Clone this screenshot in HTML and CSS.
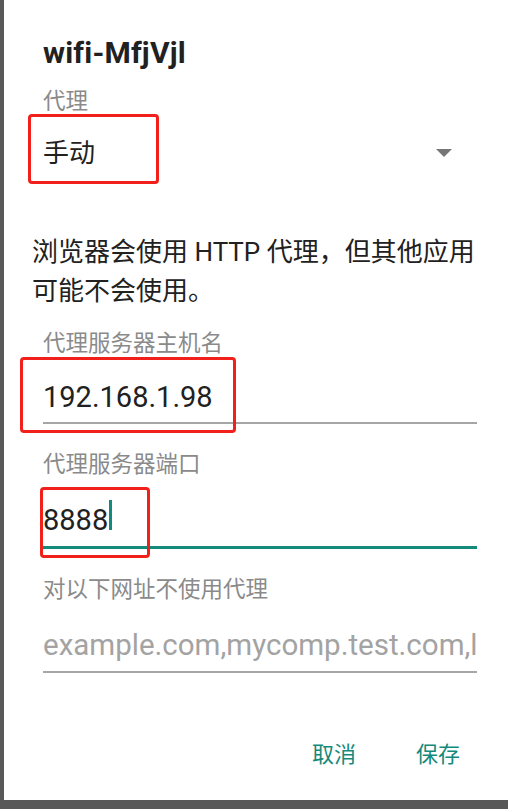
FILE: index.html
```html
<!DOCTYPE html>
<html lang="zh-CN">

<head>
    <meta charset="UTF-8">
    <meta name="viewport" content="width=device-width, initial-scale=1.0">
    <title>wifi-MfjVjl</title>
    <link rel="stylesheet" href="styles.css">
</head>

<body>
    <div class="dialog">
        <h1 class="title">wifi-MfjVjl</h1>

        <div class="label">代理</div>
        <div class="select">
            <span class="select-value">手动</span>
            <svg class="caret" width="16" height="8" viewBox="0 0 16 8">
                <path d="M0 0h16L8 8z" fill="#767676" />
            </svg>
            <span class="mark mark-select"></span>
        </div>

        <p class="note">浏览器会使用 HTTP 代理，但其他应用可能不会使用。</p>

        <div class="label">代理服务器主机名</div>
        <div class="field">
            192.168.1.98
            <span class="mark mark-host"></span>
        </div>

        <div class="label">代理服务器端口</div>
        <div class="field is-focused">
            8888<span class="cursor"></span>
            <span class="mark mark-port"></span>
        </div>

        <div class="label">对以下网址不使用代理</div>
        <div class="field is-empty">example.com,mycomp.test.com,localhost</div>

        <div class="actions">
            <button class="action">取消</button>
            <button class="action">保存</button>
        </div>
    </div>
</body>

</html>
```

FILE: styles.css
```css
body {
    margin: 0;
    background-color: #585858;
    font-family: Roboto, "Noto Sans CJK SC", sans-serif;
    color: #212121;
}

.dialog {
    box-sizing: border-box;
    width: 504px;
    height: 800px;
    margin-left: 4px;
    padding: 36px 31px 0 39px;
    background-color: #fff;
}

.title {
    margin: 0;
    font-size: 30px;
    line-height: 34px;
    font-weight: 700;
    letter-spacing: 0.2px;
}

.label {
    margin-top: 25px;
    font-size: 22.5px;
    line-height: 30px;
    color: #8a8a8a;
}

.title + .label {
    margin-top: 16px;
}

.note + .label {
    margin-top: 17px;
}

.select {
    position: relative;
    display: flex;
    align-items: center;
    justify-content: space-between;
    margin-top: 20px;
    padding-right: 25px;
    font-size: 26px;
    line-height: 34px;
}

.caret {
    display: block;
}

.note {
    width: 452px;
    margin: 63px 0 0 -11px;
    font-size: 26px;
    line-height: 39px;
}

.field {
    position: relative;
    margin-top: 21px;
    padding-bottom: 7px;
    border-bottom: 2px solid #a6a6a6;
    font-size: 29px;
    line-height: 36px;
    white-space: nowrap;
}

.field.is-focused {
    padding-bottom: 8px;
    border-bottom: 3px solid #138a7b;
}

.field.is-empty {
    margin-top: 23px;
    padding-bottom: 8px;
    overflow: hidden;
    font-size: 29.5px;
    color: #a3a3a3;
}

.cursor {
    display: inline-block;
    width: 3px;
    height: 30px;
    margin-left: 1px;
    background-color: #138a7b;
}

.actions {
    display: flex;
    justify-content: flex-end;
    gap: 60px;
    margin-top: 67px;
    padding-right: 17px;
}

.action {
    padding: 0;
    border: 0;
    background: none;
    font-family: inherit;
    font-size: 22px;
    line-height: 30px;
    color: #138a7b;
}

/* red annotation boxes drawn over the screenshot */
.mark {
    position: absolute;
    box-sizing: border-box;
    border: 3px solid #f2201a;
    border-radius: 4px;
}

.mark-select {
    left: -15px;
    top: -22px;
    width: 131px;
    height: 70px;
}

.mark-host {
    left: -23px;
    top: -22px;
    width: 216px;
    height: 76px;
}

.mark-port {
    left: -3px;
    top: -13px;
    width: 110px;
    height: 71px;
}
```
